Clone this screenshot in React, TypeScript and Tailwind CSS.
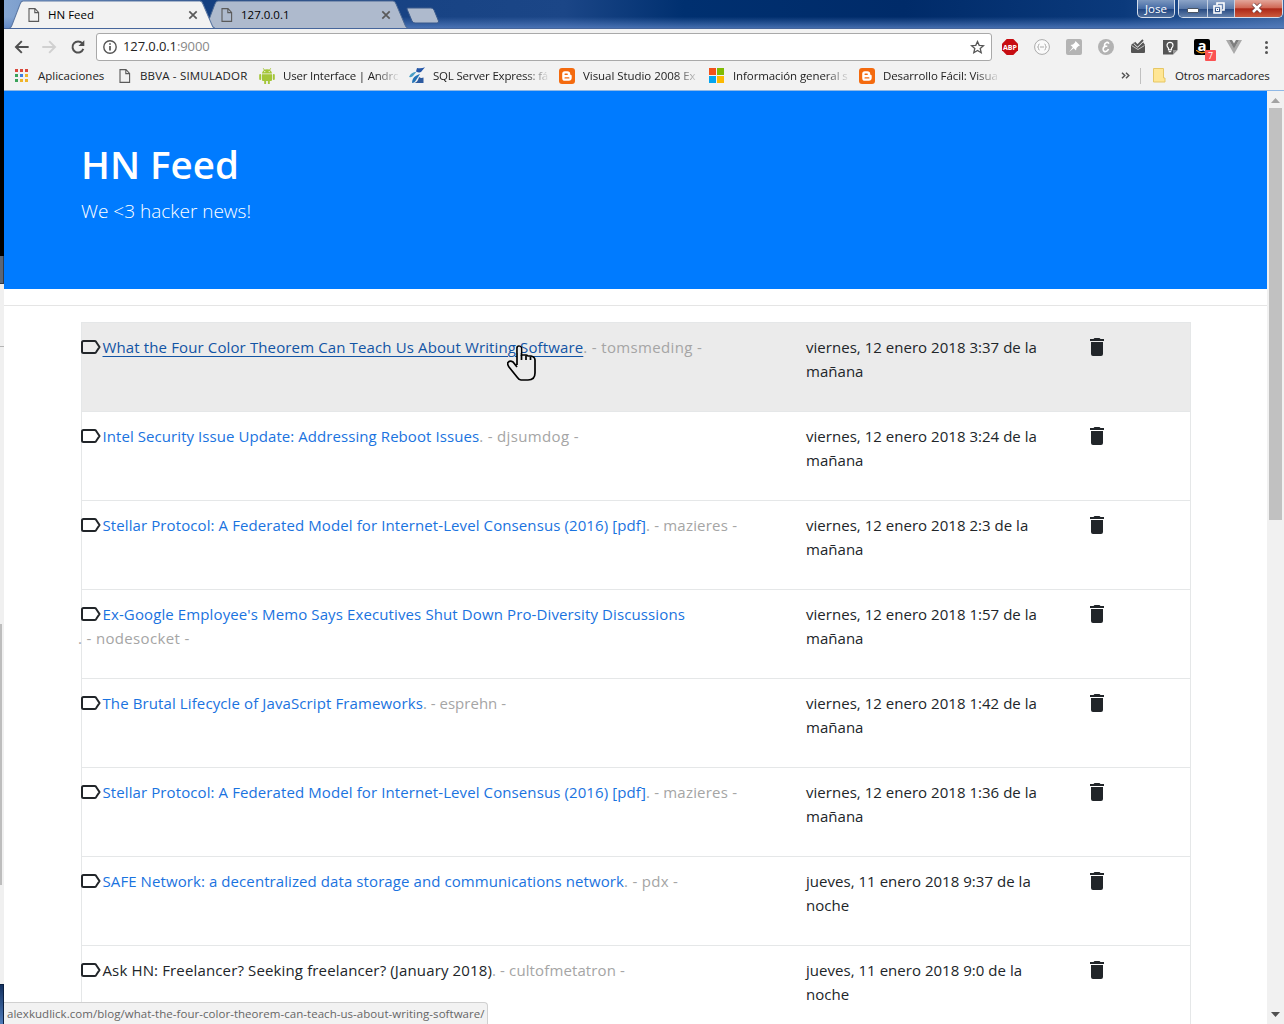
import React from "react";

type Story = {
  title: string;
  author: string;
  date: string;
  part: string;
  kind?: "hover" | "plain" | "wrap";
  track: string;
  authorTrack: string;
};

const stories: Story[] = [
  { title: "What the Four Color Theorem Can Teach Us About Writing Software", author: "tomsmeding", date: "viernes, 12 enero 2018 3:37 de la", part: "mañana", kind: "hover", track: "tracking-[0.13px]", authorTrack: "tracking-[0.35px]" },
  { title: "Intel Security Issue Update: Addressing Reboot Issues", author: "djsumdog", date: "viernes, 12 enero 2018 3:24 de la", part: "mañana", track: "tracking-[0.07px]", authorTrack: "tracking-[0.35px]" },
  { title: "Stellar Protocol: A Federated Model for Internet-Level Consensus (2016) [pdf]", author: "mazieres", date: "viernes, 12 enero 2018 2:3 de la", part: "mañana", track: "tracking-[0.1px]", authorTrack: "tracking-[0.2px]" },
  { title: "Ex-Google Employee's Memo Says Executives Shut Down Pro-Diversity Discussions", author: "nodesocket", date: "viernes, 12 enero 2018 1:57 de la", part: "mañana", kind: "wrap", track: "tracking-[0.115px]", authorTrack: "tracking-[0.34px]" },
  { title: "The Brutal Lifecycle of JavaScript Frameworks", author: "esprehn", date: "viernes, 12 enero 2018 1:42 de la", part: "mañana", track: "tracking-[0.11px]", authorTrack: "tracking-[0.01px]" },
  { title: "Stellar Protocol: A Federated Model for Internet-Level Consensus (2016) [pdf]", author: "mazieres", date: "viernes, 12 enero 2018 1:36 de la", part: "mañana", track: "tracking-[0.1px]", authorTrack: "tracking-[0.2px]" },
  { title: "SAFE Network: a decentralized data storage and communications network", author: "pdx", date: "jueves, 11 enero 2018 9:37 de la", part: "noche", track: "tracking-[0.085px]", authorTrack: "tracking-[0.3px]" },
  { title: "Ask HN: Freelancer? Seeking freelancer? (January 2018)", author: "cultofmetatron", date: "jueves, 11 enero 2018 9:0 de la", part: "noche", kind: "plain", track: "tracking-[0.14px]", authorTrack: "tracking-[0.12px]" },
];

function PageIcon({ className = "" }: { className?: string }) {
  return (
    <svg width="12" height="14" viewBox="0 0 12 14" fill="none" stroke="#5a5a5a" strokeWidth="1.1" className={className}>
      <path d="M1 .6H7L10.6 4.4V13.4H1Z M6.8 .8V4.6H10.4" />
    </svg>
  );
}

function CloseIcon() {
  return (
    <svg width="10" height="10" viewBox="0 0 10 10" stroke="#5a5a5a" strokeWidth="1.7">
      <path d="M1.300 1.300L8.700 8.700M8.700 1.300L1.300 8.700" />
    </svg>
  );
}

function Blogger() {
  return (
    <svg width="16" height="16" viewBox="0 0 16 16" className="shrink-0">
      <rect width="16" height="16" rx="3" fill="#f46a0e" />
      <path d="M5.8 3.2H8.4Q11.2 3.2 11.2 6Q11.2 6.9 12 6.9Q12.7 6.9 12.7 7.6V9.8Q12.7 12.8 9.8 12.8H6Q3.2 12.8 3.2 9.9V6Q3.2 3.2 5.8 3.2Z" fill="#fff" />
      <path d="M6.1 6.2H8.2M6.1 9.9H9.8" stroke="#f46a0e" strokeWidth="1.4" strokeLinecap="round" />
    </svg>
  );
}

function Android() {
  return (
    <svg width="16" height="16" viewBox="0 0 16 16" fill="#a4c639" className="shrink-0">
      <path d="M3 5.5A5 4.3 0 0 1 13 5.5ZM3 6.3H13V12Q13 13 12 13H10.8V16H8.9V13H7.1V16H5.2V13H4Q3 13 3 12ZM0.2 7Q.2 6 1.2 6T2.2 7V11Q2.2 12 1.2 12T.2 11ZM13.8 7Q13.8 6 14.8 6T15.8 7V11Q15.8 12 14.8 12T13.8 11Z" />
      <path d="M4.3 .3L5.6 2.4M11.7 .3L10.4 2.4" stroke="#a4c639" />
      <circle cx="5.8" cy="3.6" r=".6" fill="#fff" />
      <circle cx="10.2" cy="3.6" r=".6" fill="#fff" />
    </svg>
  );
}

function SqlIcon() {
  return (
    <svg width="17" height="17" viewBox="0 0 17 17" className="shrink-0">
      <path d="M8 1Q12 2 16 .3L12 5Q10 6 7 4.5Z" fill="#2557a8" />
      <path d="M0 10Q2 5 7.500 4.800L4 9Q3 10.500 0 10Z" fill="#4b9fc6" />
      <path d="M3 16Q3 11 7 8.700Q10 7 11 7L6.500 14Q5.500 16 3 16Z" fill="#2372b6" />
      <path d="M10 10Q12 11.500 14.500 10.500V16H5.500Q9 15 10 10Z" fill="#2d5ba0" />
    </svg>
  );
}

function MsIcon() {
  return (
    <span className="grid h-[15px] w-[15px] shrink-0 grid-cols-2 gap-px">
      <i className="bg-[#f1511b]" /><i className="bg-[#80bb03]" /><i className="bg-[#03a5f0]" /><i className="bg-[#fcb902]" />
    </span>
  );
}

const dots = ["bg-[#d9483b]", "bg-[#d9483b]", "bg-[#d9483b]", "bg-[#3aa35a]", "bg-[#3f7de0]", "bg-[#f0b429]", "bg-[#3aa35a]", "bg-[#f0b429]", "bg-[#f0b429]"];

function Bookmark({ icon, text, track }: { icon: React.ReactNode; text: string; track: string }) {
  return (
    <div className="flex w-[150px] shrink-0 items-center">
      <span className="flex w-6 shrink-0">{icon}</span>
      <span className={`w-[115px] whitespace-nowrap [mask-image:linear-gradient(to_right,black_80%,transparent_102%)] ${track}`}>{text}</span>
    </div>
  );
}

function Tab({ title, active, className }: { title: string; active?: boolean; className: string }) {
  return (
    <div className={`relative h-[28px] shrink-0 ${className}`}>
      <svg viewBox="0 0 205 28" preserveAspectRatio="none" className="absolute inset-0 h-full w-full">
        <path d="M0 28Q2 28 3 25L11 4Q12 1 14 1H190Q192 1 193 4L202 25Q203 28 205 28" fill={active ? "#f2f2f2" : "#aebacd"} stroke={active ? "#5c78a3" : "#4c6994"} strokeWidth="1" />
      </svg>
      <div className="relative flex h-full items-center pr-[17px] pl-[19px] pt-[2px]">
        <PageIcon />
        <span className="ml-[8px] flex-1 text-[11.5px]">{title}</span>
        <CloseIcon />
      </div>
    </div>
  );
}

function TitleBar() {
  return (
    <div className="relative flex h-[28px] bg-[linear-gradient(to_bottom,transparent_60%,rgba(90,130,195,0.75)_100%),linear-gradient(to_right,#86a6d1_0px,#7d9fce_18px,#143f80_200px,#1b4687_560px,#003070_680px,#002b69_900px,#0b3a7c_1120px,#3a64a0_1280px)]">
      <Tab title="HN Feed" active className="z-10 ml-[5px] w-[206px]" />
      <Tab title="127.0.0.1" className="-ml-[11px] w-[204px] [&_.flex]:pl-[17px]" />
      <svg width="34" height="17" viewBox="0 0 34 17" className="-ml-[2px] mt-[7px]">
        <path d="M1 2Q.5 1 2 1H25Q27 1 28 3L32.500 14Q33 16 31 16H9Q7 16 6 14Z" fill="#aebacd" stroke="#3a5a8c" />
      </svg>
      <div className="flex-1" />
      <div className="mr-[3px] h-[18px] w-[38px] rounded-b-[5px] border border-t-0 border-[#d5deec] bg-[linear-gradient(#7b97bf,#456ba5_50%,#1c4280_51%,#52719e)] text-center text-[11.5px] leading-[17px] text-white">Jose</div>
      <div className="mr-px flex h-[18px] w-[105px] overflow-hidden rounded-b-[5px] border border-t-0 border-[#d5deec]">
        <div className="flex w-[29px] items-center justify-center border-r border-[#c5d0e2] bg-[linear-gradient(#8ca4c8,#5b7aa9_50%,#23467f_51%,#6582ac)] pt-[3px]"><i className="h-[5px] w-[12px] rounded-[1px] border border-[#4b5563] bg-white" /></div>
        <div className="flex w-[27px] items-center justify-center border-r border-[#c5d0e2] bg-[linear-gradient(#8ca4c8,#5b7aa9_50%,#23467f_51%,#6582ac)] pr-[4px] pb-[2px]">
          <svg width="12" height="12" viewBox="0 0 12 12" fill="none" stroke="#fff" strokeWidth="1.6"><path d="M4 3V1H11V8H9" /><rect x="1" y="4" width="7" height="7" /><rect x="3.500" y="6.500" width="2" height="2" strokeWidth="1" /></svg>
        </div>
        <div className="flex flex-1 items-center justify-center bg-[linear-gradient(#e3a69a,#cf6552_48%,#ac2717_51%,#cc5a3c)] pr-[3px] pb-[2px]">
          <svg width="12" height="10" viewBox="0 0 12 10"><path d="M2 1L10 9M10 1L2 9" stroke="#6b3a3a" strokeWidth="4" /><path d="M2 1L10 9M10 1L2 9" stroke="#fff" strokeWidth="2.500" /></svg>
        </div>
      </div>
    </div>
  );
}

function Extensions() {
  return (
    <div className="flex flex-1 items-center pl-[10px]">
      <svg width="16" height="16" viewBox="0 0 16 16" className="mr-4"><path d="M4.700 0H11.300L16 4.700V11.300L11.300 16H4.700L0 11.300V4.700Z" fill="#c70d12" /><text x="8" y="10.600" textAnchor="middle" fontSize="7" fontWeight="700" fill="#fff">ABP</text></svg>
      <svg width="16" height="16" viewBox="0 0 16 16" className="mr-4" fill="none" stroke="#aaa"><circle cx="8" cy="8" r="7.400" fill="#fafafa" /><path d="M5.500 5Q4.500 5 4.500 6.500T3.500 8Q4.500 8 4.500 9.500T5.500 11M10.500 5Q11.500 5 11.500 6.500T12.500 8Q11.500 8 11.500 9.500T10.500 11M6 8H10" /></svg>
      <svg width="16" height="16" viewBox="0 0 16 16" className="mr-4"><rect width="16" height="16" rx="2" fill="#b4b4b4" /><path d="M9.500 2L14 6.500L12.500 7L10.500 9L10 11.500L7.700 9.200L3 13L6.800 8.300L4.500 6L7 5.500L9 3.500Z" fill="#fff" /></svg>
      <svg width="16" height="16" viewBox="0 0 16 16" className="mr-4"><circle cx="8" cy="8" r="8" fill="#b2b2b2" /><path d="M10.800 4.800Q10.300 2.800 8.300 3.600Q6 4.700 6.700 7.200H9.300M7.500 7.300Q4.800 8 5.200 10.700Q6 13.500 8.500 12.300Q10 11.500 10.500 10" fill="none" stroke="#fff" strokeWidth="1.600" /></svg>
      <svg width="16" height="16" viewBox="0 0 16 16" className="mr-4"><path d="M1 6L4 3.500L8 7.500L13 3L15 6V13Q15 14 14 14H2Q1 14 1 13Z" fill="#555" /><path d="M1.500 6.500L8 10.500L14.500 6.500" fill="none" stroke="#ddd" strokeWidth=".8" /><path d="M4.500 3.500L7.500 6.500L13 1" fill="none" stroke="#f2f2f2" strokeWidth="3.200" /><path d="M4.500 3.500L7.500 6.500L13 1" fill="none" stroke="#555" strokeWidth="1.800" /></svg>
      <svg width="16" height="16" viewBox="0 0 16 16" className="mr-4"><path d="M1 1H15.500V11L11 15.500H1Z" fill="#555" /><path d="M11 15.500V11H15.500Z" fill="#999" /><path d="M6.500 9.200Q5 8 5 6.300A3 3 0 0 1 11 6.300Q11 8 9.500 9.200V10.800H6.500ZM6.700 12.700H9.300" fill="none" stroke="#fff" strokeWidth="1.200" /></svg>
      <div className="relative mr-4 h-4 w-4 shrink-0 rounded-[2px] bg-black text-center text-[15px] leading-[12px] font-bold text-white">a
        <svg width="12" height="4" viewBox="0 0 12 4" className="absolute top-[11px] left-[2px]"><path d="M0 0Q5 5 11 1" fill="none" stroke="#f59a1b" strokeWidth="1.200" /></svg>
        <span className="absolute top-[11px] left-[11px] h-[11px] w-[11px] rounded-[1px] bg-[#fb5353] text-[9px] leading-[11px] font-normal">7</span>
      </div>
      <svg width="16" height="14" viewBox="0 0 16 14"><path d="M0 0H3L8 8.500L13 0H16L8 14Z" fill="#aaa" /><path d="M3 0H6L8 3.500L10 0H13L8 8.700Z" fill="#7e7e7e" /></svg>
      <div className="ml-[23px] flex flex-col gap-[2px]"><i className="h-[3px] w-[3px] rounded-full bg-[#555]" /><i className="h-[3px] w-[3px] rounded-full bg-[#555]" /><i className="h-[3px] w-[3px] rounded-full bg-[#555]" /></div>
    </div>
  );
}

function Toolbar() {
  return (
    <div className="h-[63px] border-t border-b border-t-[#47669b] border-b-[#8fb8e6] bg-[#f2f2f2]">
      <div className="flex h-[36px] items-center">
        <svg width="84" height="16" viewBox="0 0 84 16" fill="none" stroke="#505050" strokeWidth="2" className="ml-[10px] w-[82px] shrink-0">
          <path d="M15 8H2M8 2L2 8L8 14" />
          <path d="M29 8H42M36 2L42 8L36 14" stroke="#d0d0d0" />
          <path d="M70 4.300A5.700 5.700 0 1 0 71 10" />
          <path d="M72 1V7H66Z" fill="#505050" stroke="none" />
        </svg>
        <div className="flex h-[28px] w-[896px] shrink-0 items-center rounded-[3px] border border-[#a9a9a9] bg-white pr-[6px] pl-[6px]">
          <svg width="14" height="14" viewBox="0 0 14 14" fill="none" stroke="#555" strokeWidth="1.400"><circle cx="7" cy="7" r="6.200" /><path d="M7 6V10.500M7 3.300V4.800" strokeWidth="1.700" /></svg>
          <span className="ml-[6px] flex-1 text-[13px] tracking-[-0.1px] text-[#222]">127.0.0.1<span className="text-[#888]">:9000</span></span>
          <svg width="15" height="14" viewBox="0 0 15 14" fill="none" stroke="#555" strokeWidth="1.300"><path d="M7.500 1.500L9.200 5.300L13.500 5.700L10.200 8.500L11.200 12.700L7.500 10.500L3.800 12.700L4.800 8.500L1.500 5.700L5.800 5.300Z" /></svg>
        </div>
        <Extensions />
      </div>
      <div className="flex h-[21px] items-center text-[11.5px] text-[#222]">
        <div className="ml-[11px] grid grid-cols-3 gap-[2px]">{dots.map((d, i) => <i key={i} className={`h-[3px] w-[3px] ${d}`} />)}</div>
        <span className="ml-[10px] w-[81px]">Aplicaciones</span>
        <PageIcon />
        <span className="ml-[9px] w-[119px] tracking-[0.18px] whitespace-nowrap">BBVA - SIMULADOR</span>
        <Bookmark icon={<Android />} text="User Interface | Andro" track="tracking-[-0.2px]" />
        <Bookmark icon={<SqlIcon />} text="SQL Server Express: fá" track="tracking-[-0.2px]" />
        <Bookmark icon={<Blogger />} text="Visual Studio 2008 Ex" track="tracking-[-0.05px]" />
        <Bookmark icon={<MsIcon />} text="Información general s" track="tracking-[-0.1px]" />
        <Bookmark icon={<Blogger />} text="Desarrollo Fácil: Visua" track="tracking-[-0.1px]" />
        <svg width="9" height="7" viewBox="0 0 9 7" fill="none" stroke="#555" strokeWidth="1.500" className="ml-[112px]"><path d="M1 .7L3.800 3.500L1 6.300M5 .7L7.800 3.500L5 6.300" /></svg>
        <i className="ml-[10px] h-4 w-px bg-[#c0c0c0]" />
        <svg width="13" height="15" viewBox="0 0 13 15" className="ml-[12px]"><path d="M.5 .5H10.500V10H12V14H.5Z" fill="#ffe694" stroke="#e6c765" /></svg>
        <span className="ml-[9px] tracking-[-0.18px] whitespace-nowrap">Otros marcadores</span>
      </div>
    </div>
  );
}

function StoryRow({ s }: { s: Story }) {
  const link = s.kind === "hover" ? "text-[#1254a4] underline underline-offset-[3px]" : s.kind === "plain" ? "text-[#212529]" : "text-[#1a73e0]";
  return (
    <li className={`-mt-px flex h-[90px] shrink-0 border border-[#e5e7e8] pt-[12px] leading-6 ${s.kind === "hover" ? "bg-[#ebebeb]" : ""}`}>
      <div className="w-[724px] whitespace-nowrap">
        <svg width="20" height="14" viewBox="0 0 20 14" fill="none" stroke="#212529" strokeWidth="2" className="-ml-px mr-[1.5px] inline-block align-[-1px]">
          <path d="M2.500 1H13.500Q14.500 1 15 1.700L18.500 7L15 12.300Q14.500 13 13.500 13H2.500Q1 13 1 11.500V2.500Q1 1 2.500 1Z" />
        </svg>
        <span className={`${link} ${s.track}`}>{s.title}</span>
        {s.kind === "wrap" && <br />}
        <span className={`text-[#a5a5a5] ${s.authorTrack} ${s.kind === "wrap" ? "-ml-[4px]" : ""}`}>. - {s.author} -</span>
      </div>
      <div className="w-[286px] tracking-[0.03px] whitespace-nowrap text-[#212529]">{s.date}<br />{s.part}</div>
      <svg width="14" height="18" viewBox="0 0 14 18" fill="#212529" className="mt-[3px] -ml-[2px]">
        <path d="M0 1H3.500L4.500 0H9.500L10.500 1H14V3H0ZM1 4H13V16Q13 18 11 18H3Q1 18 1 16Z" />
      </svg>
    </li>
  );
}

export default function App() {
  return (
    <div className="relative flex h-[1024px] w-[1284px] overflow-hidden bg-white font-['Open_Sans','Noto_Sans',sans-serif]">
      <div className="flex w-[4px] shrink-0 flex-col bg-[#f0f0f0]">
        <i className="h-[256px] bg-black" />
        <i className="h-[28px] border-r border-b border-[#333b47] bg-[#5c6675]" />
        <i className="h-[62px]" />
        <i className="h-px bg-[#b5b5b5]" />
        <i className="h-[277px]" />
        <i className="h-[261px] w-[2px] bg-[#bdbdbd]" />
        <i className="h-[99px]" />
        <i className="flex-1 border-t border-r border-[#0b1f40] bg-[linear-gradient(#13305e,#4f7cbb)]" />
      </div>
      <div className="flex min-w-0 flex-1 flex-col">
        <TitleBar />
        <Toolbar />
        <div className="flex min-h-0 flex-1">
          <main className="flex w-[1263px] shrink-0 flex-col overflow-hidden bg-white">
            <header className="h-[198px] shrink-0 bg-[#007bff] pt-[49px] pl-[77px] text-white">
              <h1 className="text-[38.5px] leading-[48px] font-semibold">HN Feed</h1>
              <p className="mt-[8px] text-[19px] leading-[30px] font-light">We &lt;3 hacker news!</p>
            </header>
            <hr className="mt-[16px] border-[#e5e5e5]" />
            <ul className="mt-[17px] ml-[77px] flex w-[1110px] flex-col text-[15px]">
              {stories.map((s, i) => <StoryRow key={i} s={s} />)}
            </ul>
          </main>
          <div className="flex w-[17px] flex-col items-center bg-[#f1f1f1]">
            <svg width="9" height="5" viewBox="0 0 9 5" fill="#a3a3a3" className="mt-[7px]"><path d="M4.500 0L9 5H0Z" /></svg>
            <i className="mt-[5px] h-[412px] w-[13px] bg-[#c1c1c1]" />
            <svg width="9" height="5" viewBox="0 0 9 5" fill="#505050" className="mt-auto mb-[7px]"><path d="M4.500 5L9 0H0Z" /></svg>
          </div>
        </div>
      </div>
      <div className="absolute bottom-0 left-[4px] h-[22px] w-[484px] rounded-tr-[4px] border-t border-r border-[#d0d0d0] bg-[#f2f2f2] pl-[3px] text-[11.5px] leading-[22px] tracking-[0.04px] whitespace-nowrap text-[#666]">alexkudlick.com/blog/what-the-four-color-theorem-can-teach-us-about-writing-software/</div>
      <svg width="29" height="37" viewBox="0 0 29 37" className="absolute top-[345px] left-[507px]" fill="none" stroke="#000" strokeWidth="1.700">
        <path d="M10 20V3Q10 1 12 1T14.500 3V10H19Q20 10 21 11H24Q28 12 28 15V28Q28 35 21 35H14Q12 35 10 32L2 22Q0 19 1 17.500Q3 15 6 17L10 22" fill="#ebebeb" />
        <path d="M14.500 10V15M19 10.500V15M23.500 11.500V15" />
        <path d="M10.900 8V3Q11 1.800 12.200 1.800T13.700 3V8Z" fill="#ebebeb" stroke="none" />
      </svg>
    </div>
  );
}
